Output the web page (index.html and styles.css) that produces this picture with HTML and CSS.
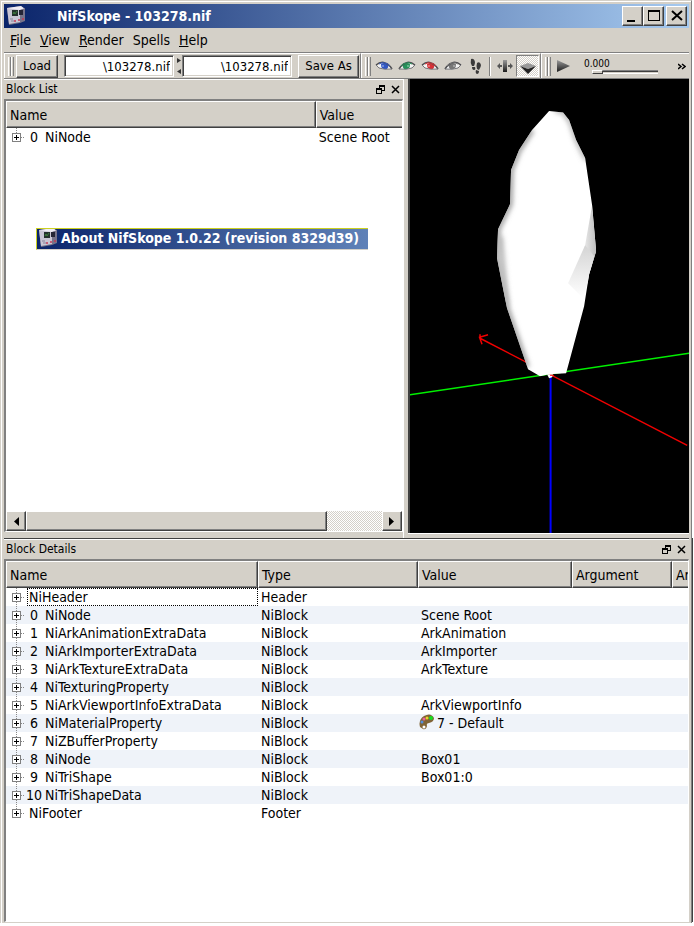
FILE: index.html
```html
<!DOCTYPE html>
<html lang="en">
<head>
<meta charset="utf-8">
<meta name="viewport" content="width=device-width, initial-scale=1">
<title>NifSkope - 103278.nif</title>
<link rel="stylesheet" href="styles.css">
</head>
<body>
<svg class="defs" aria-hidden="true">
  <defs>
    <linearGradient id="metal" x1="0" y1="0" x2="0" y2="1"><stop offset="0" stop-color="#9a9a9a"/><stop offset="1" stop-color="#1c1c1c"/></linearGradient>
    <symbol id="app" viewBox="0 0 20 20">
      <path d="M1 2 15 0 19 3 19 15 14 17 3 19Z" fill="#777488"/>
      <path d="M1 2H14V16L3 18Z" fill="#c9c6d4"/>
      <path d="M1 2 15 0 19 3 14 4Z" fill="#efedf5"/>
      <path d="M14 4 19 2V14L14 16Z" fill="#77748a"/>
      <path d="M6 4H12V10H6Z" fill="#24322c"/>
      <path d="M7 8 8 6 9 8 11 5" fill="none" stroke="#3f7d3f"/>
      <path d="M13 4H17V9H13Z" fill="#252636"/>
      <path d="M4 13H7M5 15H8" stroke="#87849a"/>
      <path d="M8 15H10M12 14H14M16 13H18" stroke="#c43a55" stroke-width="1.5"/>
    </symbol>
    <symbol id="eye" viewBox="0 0 18 12">
      <path d="M2 6Q6 2 10 3Q14 4 16 9Q9 11 5 8Z" fill="#f4f4f4"/>
      <path d="M6 4Q9 2 13 4Q14 7 12 9Q9 10 7 8Q6 7 6 4Z" fill="currentColor"/>
      <path d="M1 5Q6 1 10 3Q14 4 17 9" fill="none" stroke="#4c4c50" stroke-width="1.5"/>
      <path d="M1 5 4 8Q9 10 17 9" fill="none" stroke="#77777b"/>
      <path d="M4 4Q7 2 10 3Q14 4 15 6" fill="none" stroke="currentColor"/>
      <path d="M8 5V7" stroke="#fff" opacity=".6"/>
    </symbol>
    <symbol id="float" viewBox="0 0 9 9"><path d="M3 0H9V6H6V9H0V3H3ZM4 2V3H6V5H8V2ZM1 5V8H5V5Z" fill="#000" fill-rule="evenodd"/></symbol>
    <symbol id="close" viewBox="0 0 9 9"><path d="M1 1 8 8M8 1 1 8" stroke="#000" stroke-width="1.5"/></symbol>
  </defs>
</svg>
<main class="window">
  <header class="titlebar">
    <svg class="app-icon"><use href="#app"/></svg>
    <h1>NifSkope - 103278.nif</h1>
    <div class="window-buttons">
      <button aria-label="Minimize"><svg viewBox="0 0 16 16"><path d="M2 12H10V14H2Z"/></svg></button>
      <button aria-label="Maximize"><svg viewBox="0 0 16 16"><path d="M2 2H14V13H2ZM3 4V12H13V4Z" fill-rule="evenodd"/></svg></button>
      <button class="close" aria-label="Close"><svg viewBox="0 0 16 16"><path d="M3 3 13 12M13 3 3 12" stroke="#000" stroke-width="2"/></svg></button>
    </div>
  </header>
  <nav class="menubar">
    <button><u>F</u>ile</button><button><u>V</u>iew</button><button><u>R</u>ender</button><button>Spells</button><button><u>H</u>elp</button>
  </nav>
  <div class="toolbar">
    <div class="group files">
      <span class="grip"></span>
      <button class="push">Load</button>
      <input class="path" aria-label="Load file" value="\103278.nif">
      <svg class="arrows" viewBox="0 0 6 20"><path d="M1 2 5 4.5 1 7ZM5 13 1 15.5 5 18Z" fill="#333"/></svg>
      <input class="path" aria-label="Save file" value="\103278.nif">
      <button class="push save">Save As</button>
    </div>
    <div class="group views">
      <span class="grip"></span>
      <button class="tool blue" aria-label="View top"><svg class="eye"><use href="#eye"/></svg></button>
      <button class="tool green" aria-label="View front"><svg class="eye flipped"><use href="#eye"/></svg></button>
      <button class="tool red" aria-label="View side"><svg class="eye"><use href="#eye"/></svg></button>
      <button class="tool gray" aria-label="View user"><svg class="eye flipped"><use href="#eye"/></svg></button>
      <button class="tool" aria-label="Walk"><svg class="icon" viewBox="0 0 16 16" fill="#3a3a3a"><path d="M3 1Q6 0 7 4Q7 6 6 8L4 8Q2 5 3 1ZM4 9H7Q8 12 6 12Q4 12 4 9ZM9 5Q12 3 13 7Q13 9 11 12L9 11Q8 8 9 5ZM8 12 11 13Q11 16 9 16Q7 15 8 12Z"/></svg></button>
      <span class="divider"></span>
      <button class="tool" aria-label="Flip"><svg class="icon" viewBox="0 0 16 16"><path d="M6 2H10V14H6Z" fill="url(#metal)"/><path d="M0 8 3 5V7H5V9H3V11ZM16 8 13 5V7H11V9H13V11Z" fill="#555"/></svg></button>
      <button class="tool checked" aria-label="Perspective"><svg class="icon" viewBox="0 0 16 16"><path d="M0 8 8 5 16 8 8 11Z" fill="#999"/><path d="M0 8 8 11 16 8 8 16Z" fill="#222"/></svg></button>
    </div>
    <div class="group anim">
      <span class="grip"></span>
      <button class="tool" aria-label="Play"><svg class="icon" viewBox="0 0 16 16"><path d="M2 2 15 8 2 14Z" fill="url(#metal)"/></svg></button>
      <div class="time"><label for="time">0.000</label><input id="time" type="range" value="0"></div>
      <button class="more" aria-label="More tools"><svg viewBox="0 0 8 7"><path d="M0 1 3 3.5 0 6M4 1 7 3.5 4 6" fill="none" stroke="#000" stroke-width="1.5"/></svg></button>
    </div>
  </div>
  <div class="workspace">
    <section class="dock list">
      <div class="dock-title"><h2>Block List</h2><button aria-label="Float"><svg><use href="#float"/></svg></button><button aria-label="Close"><svg><use href="#close"/></svg></button></div>
      <div class="tree">
        <table>
          <colgroup><col><col class="list-value"></colgroup>
          <thead><tr><th>Name</th><th>Value</th></tr></thead>
          <tbody><tr class="first last"><td><div class="node"><button class="expand" aria-label="Expand"></button><span class="num">0</span>NiNode</div></td><td>Scene Root</td></tr></tbody>
        </table>
        <div class="scrollbar"><button aria-label="Scroll left"><svg viewBox="0 0 5 9"><path d="M5 0V9L0 4.5Z"/></svg></button><div class="thumb"></div><div class="track"></div><button aria-label="Scroll right"><svg viewBox="0 0 5 9"><path d="M0 0V9L5 4.5Z"/></svg></button></div>
      </div>
      <div class="about"><svg class="app-icon"><use href="#app"/></svg><span>About NifSkope 1.0.22 (revision 8329d39)</span></div>
    </section>
    <section class="viewport" aria-label="3D view">
      <svg viewBox="410 79 279 454" preserveAspectRatio="xMidYMid slice">
        <defs>
          <filter id="soft" x="-50%" y="-20%" width="200%" height="140%"><feGaussianBlur stdDeviation="2.5"/></filter>
          <linearGradient id="facet" x1="0" y1="0" x2="1" y2="0"><stop offset="0" stop-color="#fff"/><stop offset="1" stop-color="#bbb"/></linearGradient>
          <linearGradient id="dent" x1="0" y1="0" x2="0" y2="1"><stop offset="0" stop-color="#d4d4d4"/><stop offset="1" stop-color="#fff"/></linearGradient>
          <clipPath id="shape"><path d="M549 111 563 112.500 569 120 576 140 585 158 592 205 596 251 589 274 584 306 573 347 566 373 549 374 540 376 528 369 507 308 497 258 498 229 510 204 511 170 519 150 532 130Z"/></clipPath>
        </defs>
        <path d="M410 394.500 689 353" stroke="#00f000" stroke-width="1.500"/>
        <path d="M550.500 375V533" stroke="#00f" stroke-width="2"/>
        <path d="M480 338 687 445M488 334.500 479.500 337 482 344M480 334V338" fill="none" stroke="#f00000" stroke-width="1.500"/>
        <g clip-path="url(#shape)">
          <path d="M490 100H600V380H490Z" fill="#fff"/>
          <path d="M532 130 519 150 511 170 510 204 498 229 497 258 507 308 527 367" fill="none" stroke="#999" stroke-width="5" filter="url(#soft)"/>
          <path d="M555 111 563 112 570 122 576 140 586 160" fill="none" stroke="#999" stroke-width="3" filter="url(#soft)"/>
          <path d="M592 205 597 251 589 274 578 265 585 245Z" fill="url(#facet)"/>
          <path d="M585 245 568 283 583 298 590 274 594 256Z" fill="url(#dent)"/>
          <path d="M497 235 503 237 509 307 503 300Z" fill="#bbb" filter="url(#soft)"/>
        </g>
        <path d="M547 374H553L552 377 549 378Z" fill="#fff"/><path d="M550 375H554" stroke="#f00"/>
      </svg>
    </section>
  </div>
  <section class="dock details">
    <div class="dock-title"><h2>Block Details</h2><button aria-label="Float"><svg><use href="#float"/></svg></button><button aria-label="Close"><svg><use href="#close"/></svg></button></div>
    <div class="tree">
      <table class="striped">
        <colgroup><col><col class="c-type"><col class="c-value"><col class="c-arg"><col class="c-rest"></colgroup>
        <thead><tr><th>Name</th><th>Type</th><th>Value</th><th>Argument</th><th>Ar</th></tr></thead>
        <tbody>
          <tr class="first"><td><div class="node"><button class="expand" aria-label="Expand"></button><span class="plain focus">NiHeader</span></div></td><td>Header</td><td></td><td></td><td></td></tr>
          <tr><td><div class="node"><button class="expand" aria-label="Expand"></button><span class="num">0</span>NiNode</div></td><td>NiBlock</td><td>Scene Root</td><td></td><td></td></tr>
          <tr><td><div class="node"><button class="expand" aria-label="Expand"></button><span class="num">1</span>NiArkAnimationExtraData</div></td><td>NiBlock</td><td>ArkAnimation</td><td></td><td></td></tr>
          <tr><td><div class="node"><button class="expand" aria-label="Expand"></button><span class="num">2</span>NiArkImporterExtraData</div></td><td>NiBlock</td><td>ArkImporter</td><td></td><td></td></tr>
          <tr><td><div class="node"><button class="expand" aria-label="Expand"></button><span class="num">3</span>NiArkTextureExtraData</div></td><td>NiBlock</td><td>ArkTexture</td><td></td><td></td></tr>
          <tr><td><div class="node"><button class="expand" aria-label="Expand"></button><span class="num">4</span>NiTexturingProperty</div></td><td>NiBlock</td><td></td><td></td><td></td></tr>
          <tr><td><div class="node"><button class="expand" aria-label="Expand"></button><span class="num">5</span>NiArkViewportInfoExtraData</div></td><td>NiBlock</td><td>ArkViewportInfo</td><td></td><td></td></tr>
          <tr><td><div class="node"><button class="expand" aria-label="Expand"></button><span class="num">6</span>NiMaterialProperty</div></td><td>NiBlock</td><td class="material"><div><svg viewBox="0 0 16 16"><path d="M1 13Q-1 6 5 2Q12-2 15 4Q15 8 10 9Q7 9 8 12Q7 16 4 15Z" fill="#806436"/><circle cx="5" cy="13" r="1.500" fill="#fff"/><circle cx="3" cy="8" r="1.500" fill="#5590dd"/><circle cx="5" cy="5" r="1.500" fill="#ed609c"/><circle cx="8" cy="4" r="1.500" fill="#eed229"/><circle cx="12" cy="4" r="2" fill="#15df22"/></svg>7 - Default</div></td><td></td><td></td></tr>
          <tr><td><div class="node"><button class="expand" aria-label="Expand"></button><span class="num">7</span>NiZBufferProperty</div></td><td>NiBlock</td><td></td><td></td><td></td></tr>
          <tr><td><div class="node"><button class="expand" aria-label="Expand"></button><span class="num">8</span>NiNode</div></td><td>NiBlock</td><td>Box01</td><td></td><td></td></tr>
          <tr><td><div class="node"><button class="expand" aria-label="Expand"></button><span class="num">9</span>NiTriShape</div></td><td>NiBlock</td><td>Box01:0</td><td></td><td></td></tr>
          <tr><td><div class="node"><button class="expand" aria-label="Expand"></button><span class="num">10</span>NiTriShapeData</div></td><td>NiBlock</td><td></td><td></td><td></td></tr>
          <tr class="last"><td><div class="node"><button class="expand" aria-label="Expand"></button><span class="plain">NiFooter</span></div></td><td>Footer</td><td></td><td></td><td></td></tr>
        </tbody>
      </table>
    </div>
  </section>
</main>
</body>
</html>
```
FILE: styles.css
```css
:root {
  --face: #d4d0c8;
  --shade: #808080;
  --dark: #404040;
}
* { box-sizing: border-box; }
body {
  margin: 0;
  padding-bottom: 3px;
  background: #fff;
  color: #000;
  font: 14px/18px "DejaVu Sans Condensed", "Noto Sans", sans-serif;
}
button, input { font: inherit; color: inherit; margin: 0; padding: 0; border: 0; background: none; }
svg { display: block; flex: none; }
h1, h2 { margin: 0; font-weight: normal; font-size: inherit; }
.defs { position: absolute; width: 0; height: 0; }
.window {
  display: flex;
  flex-direction: column;
  min-height: calc(100vh - 3px);
  margin-right: 2px;
  padding: 3px 2px 1px 3px;
  background: var(--face);
  border: solid;
  border-width: 1px 1px 0 1px;
  border-color: var(--face) var(--shade) #fff var(--face);
  box-shadow: inset 1px 1px #fff;
}

.titlebar {
  display: flex;
  align-items: center;
  height: 24px;
  padding: 0 2px;
  background: linear-gradient(90deg, #0a246a, #a6caf0);
  color: #fff;
}
.app-icon { width: 20px; height: 20px; }
.titlebar h1 { flex: 1; padding-left: 31px; font: bold 14px/24px "DejaVu Sans Condensed", sans-serif; }
.window-buttons { display: flex; }
.window-buttons button, .push, .scrollbar button, .thumb {
  background: var(--face);
  border: 1px solid;
  border-color: #fff var(--dark) var(--dark) #fff;
  box-shadow: inset -1px -1px var(--shade);
}
.window-buttons button { width: 21px; height: 20px; display: grid; place-items: center; }
.window-buttons svg { width: 16px; height: 16px; }
.window-buttons .close { margin-left: 2px; }

.menubar { display: flex; gap: 9px; height: 24px; padding: 0 6px; align-items: center; }
.menubar button { line-height: 24px; }

.toolbar {
  display: flex;
  height: 27px;
  border-top: 1px solid var(--shade);
  border-bottom: 1px solid var(--shade);
}
.group { display: flex; align-items: center; border-top: 1px solid #fff; border-left: 1px solid #fff; padding-left: 3px; }
.grip { width: 6px; height: 19px; background: linear-gradient(90deg, #fff 1px, var(--face) 1px 2px, var(--shade) 2px 3px, #fff 3px 4px, var(--face) 4px 5px, var(--shade) 5px); }
.push { height: 23px; width: 42px; font-size: 13px; margin-left: 2px; }
.push.save { width: 61px; margin-left: 6px; }
.path {
  width: 110px;
  height: 22px;
  margin-left: 6px;
  padding-right: 3px;
  text-align: right;
  font-size: 13px;
  background: #fff;
  border: 1px solid;
  border-color: var(--shade) #fff #fff var(--shade);
  box-shadow: inset 1px 1px var(--dark), inset -1px -1px var(--face);
}
.arrows { width: 6px; height: 20px; margin-left: 2px; }
.arrows + .path { margin-left: 0; }
.files { padding-right: 1px; border-right: 1px solid var(--shade); }
.views { padding-right: 1px; border-right: 1px solid var(--shade); }
.tool { width: 23px; height: 22px; display: grid; place-items: center; }
.views .grip { margin-right: 1px; }
.icon { width: 16px; height: 16px; }
.eye { width: 18px; height: 12px; }
.flipped { transform: scaleX(-1); }
.blue { color: #3157c4; }
.green { color: #259259; }
.red { color: #d63036; }
.gray { color: #777; }
.divider { width: 2px; height: 19px; margin: 0 2px; background: linear-gradient(90deg, var(--shade) 1px, #fff 1px); }
.checked {
  border: 1px solid;
  border-color: var(--shade) #fff #fff var(--shade);
  background: repeating-conic-gradient(#fff 0 25%, var(--face) 0 50%) 0 0 / 2px 2px;
}
.anim { flex: 1; }
.time { width: 74px; margin-left: 10px; display: flex; flex-direction: column; }
.time label { font-size: 10px; line-height: 12px; }
.time input { appearance: none; width: 66px; height: 5px; margin-left: 8px; background: linear-gradient(var(--shade) 1px, var(--dark) 1px 2px, var(--face) 2px 3px, #fff 3px 4px, transparent 4px); }
.time input::-webkit-slider-thumb { appearance: none; width: 11px; height: 4px; background: var(--face); border: 1px solid; border-color: #fff var(--dark) var(--dark) #fff; }
.more { margin-left: auto; padding-right: 3px; }
.more svg { width: 8px; height: 7px; }

.workspace { display: flex; flex: 460 1 0; min-height: 240px; }
.dock { display: flex; flex-direction: column; min-width: 0; position: relative; }
.list { flex: 400 1 0; border-right: 1px solid #fff; }
.dock-title { display: flex; align-items: center; height: 20px; padding: 0 3px 0 2px; border-top: 1px solid #fff; }
.dock-title h2 { flex: 1; font-size: 12px; line-height: 19px; }
.dock-title button { margin-left: 6px; }
.dock-title svg { width: 9px; height: 9px; }
.tree {
  display: flex;
  flex: 1;
  flex-direction: column;
  justify-content: space-between;
  background: #fff;
  border: solid;
  border-width: 2px 1px 1px 2px;
  border-color: var(--shade) #fff #fff var(--shade);
  box-shadow: inset 0 1px var(--dark);
}
.list .tree { margin-bottom: 6px; }
table { width: 100%; table-layout: fixed; border-collapse: separate; border-spacing: 0; }
.list-value { width: 86px; }
.c-type { width: 160px; }
.c-value { width: 154px; }
.c-arg { width: 100px; }
.c-rest { width: 16px; }
th, td { padding: 0 3px; text-align: left; font-weight: normal; white-space: nowrap; overflow: hidden; }
th {
  height: 27px;
  background: var(--face);
  border: 1px solid;
  border-color: #fff var(--dark) var(--dark) #fff;
  box-shadow: inset -1px -1px var(--shade);
}
th:last-child { padding-right: 0; border-right: 0; box-shadow: inset 0 -1px var(--shade); }
td { height: 18px; }
td:first-child { padding: 0; }
.striped tbody tr:nth-child(even) { background: #eff3f9; }
.node {
  display: flex;
  align-items: center;
  height: 18px;
  padding-left: 6px;
  background: repeating-linear-gradient(#888 0 1px, transparent 1px 2px) 10px 0 / 1px 18px no-repeat, repeating-linear-gradient(90deg, #888 0 1px, transparent 1px 2px) 15px 9px / 4px 1px no-repeat;
}
.last .node { background-size: 1px 9px, 4px 1px; }
.expand {
  flex: none;
  width: 9px;
  height: 9px;
  border: 1px solid var(--shade);
  background: linear-gradient(#000, #000) 1px 3px / 5px 1px no-repeat, linear-gradient(#000, #000) 3px 1px / 1px 5px no-repeat, #fff;
}
.num { width: 18px; margin: 0 2px 0 4px; text-align: center; }
.plain { flex: 1; height: 18px; margin-left: 6px; padding-left: 1px; border: 1px solid transparent; line-height: 16px; }
.focus { border: 1px dotted #000; }
.material div { display: flex; gap: 2px; margin-left: -2px; }
.material svg { width: 16px; height: 16px; }
.scrollbar { display: flex; height: 20px; }
.scrollbar button { width: 20px; display: grid; place-items: center; }
.scrollbar svg { width: 5px; height: 9px; }
.thumb { flex: 301 1 0; }
.track { flex: 55 1 0; background: repeating-conic-gradient(#fff 0 25%, var(--face) 0 50%) 0 0 / 2px 2px; }
.about {
  position: absolute;
  left: 32px;
  top: 149px;
  display: flex;
  width: 332px;
  height: 22px;
  padding-left: 1px;
  overflow: hidden;
  color: #fff;
  font: bold 14px/19px "DejaVu Sans Condensed", sans-serif;
  white-space: nowrap;
  background: linear-gradient(90deg, #0a246a, #6082b8);
  border: solid;
  border-width: 1px 0 1px 1px;
  border-color: #cbd020 var(--face) var(--face) #cbd020;
}
.about span { margin-left: 3px; }
.about .app-icon { margin-top: -1px; }
.viewport {
  display: grid;
  flex: 280 1 0;
  min-width: 0;
  margin: 0 0 5px 4px;
  overflow: hidden;
  position: relative;
  background: #000;
  border-left: 2px solid var(--dark);
  box-shadow: 0 1px #fff;
}
.viewport svg { width: 100%; height: 100%; min-height: 0; }
.details {
  flex: 383 1 0;
  border-top: 1px solid var(--dark);
  box-shadow: 2px 0 var(--face), 3px 0 var(--shade), 4px 0 var(--dark);
}
```
